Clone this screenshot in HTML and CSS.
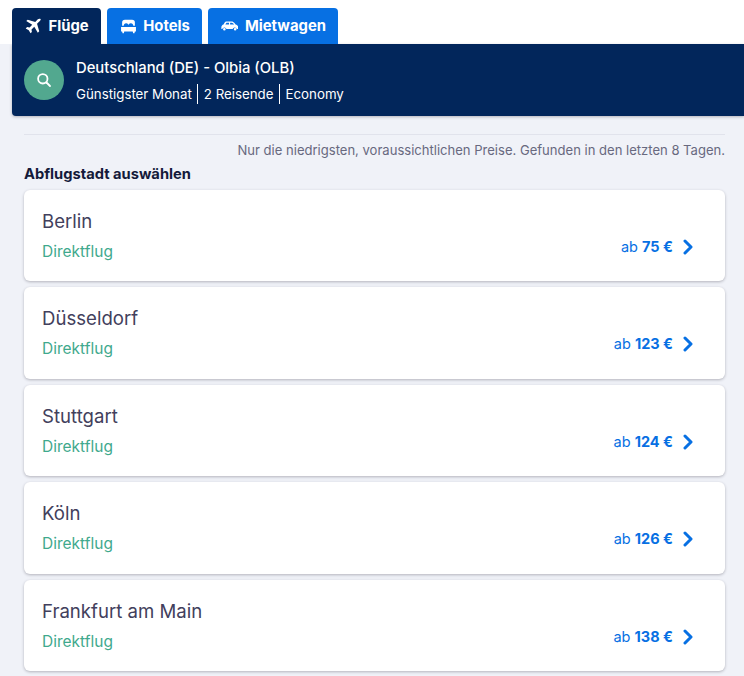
FILE: index.html
```html
<!DOCTYPE html>
<html lang="de">
<head>
<meta charset="utf-8">
<title>Flüge</title>
<link rel="stylesheet" href="styles.css">
</head>
<body>
<nav class="tabs">
  <a class="tab tab-active">
    <svg class="tab-icon" viewBox="0 0 24 24" width="17" height="17"><path fill="#fff" d="M22 1.500c-1-.9-2.900-.7-3.900.3l-3.600 3.700L3.800 2.400 1.800 4.400l8.400 5-3.700 3.900-3.500-.5L1 14.700l4.300 2.500 2.500 4.300 1.900-1.900-.5-3.500 3.900-3.700 5 8.400 2-2-3.100-10.700L20.200 5c1-1 2.700-2.600 1.800-3.500z"/></svg>
    Flüge
  </a>
  <a class="tab">
    <svg class="tab-icon" viewBox="0 0 24 24" width="17" height="17"><path fill="#fff" d="M7 2.500h10a4 4 0 0 1 4 4v4.500h-2.200c-.3-2.200-1.300-3.500-3.300-3.500h-.5c-1.500 0-2.600 1-3 2.500h-.1c-.4-1.500-1.500-2.500-3-2.500h-.4c-2 0-3 1.300-3.300 3.500H3V6.500a4 4 0 0 1 4-4zM1.500 12.800h21V19H21l-.6 2.500h-1.800L18 19H6l-.6 2.500H3.600L3 19H1.500z"/></svg>
    Hotels
  </a>
  <a class="tab">
    <svg class="tab-icon" viewBox="0 0 24 20" width="17.500" height="15"><path fill="#fff" d="M8 3h6.500c1.600 0 3 .8 4 2.200l1.500 2c2 .5 3.500 1.700 3.500 3.500v2.800h-1.700a3 3 0 0 0-5.800 0H7.500a3 3 0 0 0-5.800 0H.5V11C.5 9 2 7.800 3.500 7.300l1.300-2.400C5.500 3.700 6.600 3 8 3zm-.5 1.800L6 7.400h5V4.800zm5 0v2.600H18l-1.300-1.500c-.6-.7-1.300-1.100-2.200-1.100zM4.600 12a1.800 1.800 0 1 1 0 3.600 1.800 1.800 0 0 1 0-3.600zm14.800 0a1.800 1.800 0 1 1 0 3.600 1.800 1.800 0 0 1 0-3.600z"/></svg>
    Mietwagen
  </a>
</nav>
<main class="content">
  <section class="search">
    <div class="search-circle">
      <svg viewBox="0 0 16 16" width="16" height="16"><circle cx="6.800" cy="6.800" r="4.700" fill="none" stroke="#fff" stroke-width="1.800"/><path d="M10.500 10.500 14 14" stroke="#fff" stroke-width="1.800" stroke-linecap="round"/></svg>
    </div>
    <div class="search-text">
      <div class="route">Deutschland (DE) - Olbia (OLB)</div>
      <div class="meta"><span>Günstigster Monat</span><span>2 Reisende</span><span>Economy</span></div>
    </div>
  </section>
  <div class="body">
    <p class="note">Nur die niedrigsten, voraussichtlichen Preise. Gefunden in den letzten 8 Tagen.</p>
    <h2 class="heading">Abflugstadt auswählen</h2>
    <ul class="cards">
      <li class="card"><div><div class="city">Berlin</div><div class="direct">Direktflug</div></div><div class="price">ab <b>75 €</b><svg class="chev" viewBox="0 0 10 16" width="10" height="16"><path d="M2 2l6 6-6 6" fill="none" stroke="#0770e3" stroke-width="3" stroke-linecap="round" stroke-linejoin="round"/></svg></div></li>
      <li class="card"><div><div class="city">Düsseldorf</div><div class="direct">Direktflug</div></div><div class="price">ab <b>123 €</b><svg class="chev" viewBox="0 0 10 16" width="10" height="16"><path d="M2 2l6 6-6 6" fill="none" stroke="#0770e3" stroke-width="3" stroke-linecap="round" stroke-linejoin="round"/></svg></div></li>
      <li class="card"><div><div class="city">Stuttgart</div><div class="direct">Direktflug</div></div><div class="price">ab <b>124 €</b><svg class="chev" viewBox="0 0 10 16" width="10" height="16"><path d="M2 2l6 6-6 6" fill="none" stroke="#0770e3" stroke-width="3" stroke-linecap="round" stroke-linejoin="round"/></svg></div></li>
      <li class="card"><div><div class="city">Köln</div><div class="direct">Direktflug</div></div><div class="price">ab <b>126 €</b><svg class="chev" viewBox="0 0 10 16" width="10" height="16"><path d="M2 2l6 6-6 6" fill="none" stroke="#0770e3" stroke-width="3" stroke-linecap="round" stroke-linejoin="round"/></svg></div></li>
      <li class="card"><div><div class="city">Frankfurt am Main</div><div class="direct">Direktflug</div></div><div class="price">ab <b>138 €</b><svg class="chev" viewBox="0 0 10 16" width="10" height="16"><path d="M2 2l6 6-6 6" fill="none" stroke="#0770e3" stroke-width="3" stroke-linecap="round" stroke-linejoin="round"/></svg></div></li>
    </ul>
  </div>
</main>
</body>
</html>
```
FILE: styles.css
```css
* { box-sizing: border-box; }
html, body { margin: 0; padding: 0; }
body {
  font-family: "Inter", "Noto Sans", sans-serif;
  background: #fff;
  height: 676px;
  overflow: hidden;
}
.tabs {
  display: flex;
  gap: 6px;
  padding: 8px 0 0 12px;
  height: 44px;
}
.tab {
  display: flex;
  align-items: center;
  gap: 6.500px;
  height: 36px;
  padding: 0 12px 0 13px;
  background: #0770e3;
  color: #fff;
  font-size: 14.850px;
  font-weight: 700;
  border-radius: 4px 4px 0 0;
}
.tab-active { background: #02265b; }
.content {
  background: #f0f2f8;
  height: 632px;
  padding-left: 12px;
}
.search {
  display: flex;
  align-items: center;
  gap: 12px;
  height: 72px;
  padding-left: 12px;
  background: #02265b;
  border-radius: 0 0 0 4px;
  box-shadow: 0 1px 3px rgba(37, 32, 51, .3);
  color: #fff;
}
.search-circle {
  display: flex;
  align-items: center;
  justify-content: center;
  width: 40px;
  height: 40px;
  border-radius: 50%;
  background: #52a88f;
}
.search-text { display: flex; flex-direction: column; gap: 7px; padding-top: 2px; }
.route { font-size: 14.800px; font-weight: 500; line-height: 18px; }
.meta { display: flex; font-size: 13.300px; line-height: 20px; }
.meta span { padding: 0 5px 0 6px; border-left: 1px solid #fff; }
.meta span:first-child { padding-left: 0; border-left: 0; }
.body {
  padding: 18px 19px 0 12px;
}
.note {
  margin: 0;
  padding-top: 7px;
  border-top: 1px solid #e1e3ec;
  font-size: 13.050px;
  line-height: 17px;
  color: #68697f;
  text-align: right;
}
.heading {
  margin: 6px 0 6.600px;
  font-size: 14.700px;
  line-height: 18px;
  font-weight: 700;
  color: #141a3a;
}
.cards {
  list-style: none;
  margin: 0;
  padding: 0;
  display: flex;
  flex-direction: column;
  gap: 6px;
}
.card {
  display: flex;
  align-items: flex-end;
  justify-content: space-between;
  height: 91.500px;
  padding: 0 32px 19.500px 18px;
  background: #fff;
  border-radius: 6px;
  box-shadow: 0 1px 3px rgba(37, 32, 51, .3);
}
.city {
  font-size: 18.600px;
  line-height: 24px;
  color: #42405c;
  margin-bottom: 9px;
}
.direct {
  font-size: 15.500px;
  line-height: 20px;
  color: #3fa98d;
}
.price {
  display: flex;
  align-items: center;
  margin-bottom: 3px;
  font-size: 14.500px;
  line-height: 24px;
  color: #0770e3;
  white-space: pre;
}
.price b { font-weight: 700; }
.chev { margin-left: 10px; }
```
